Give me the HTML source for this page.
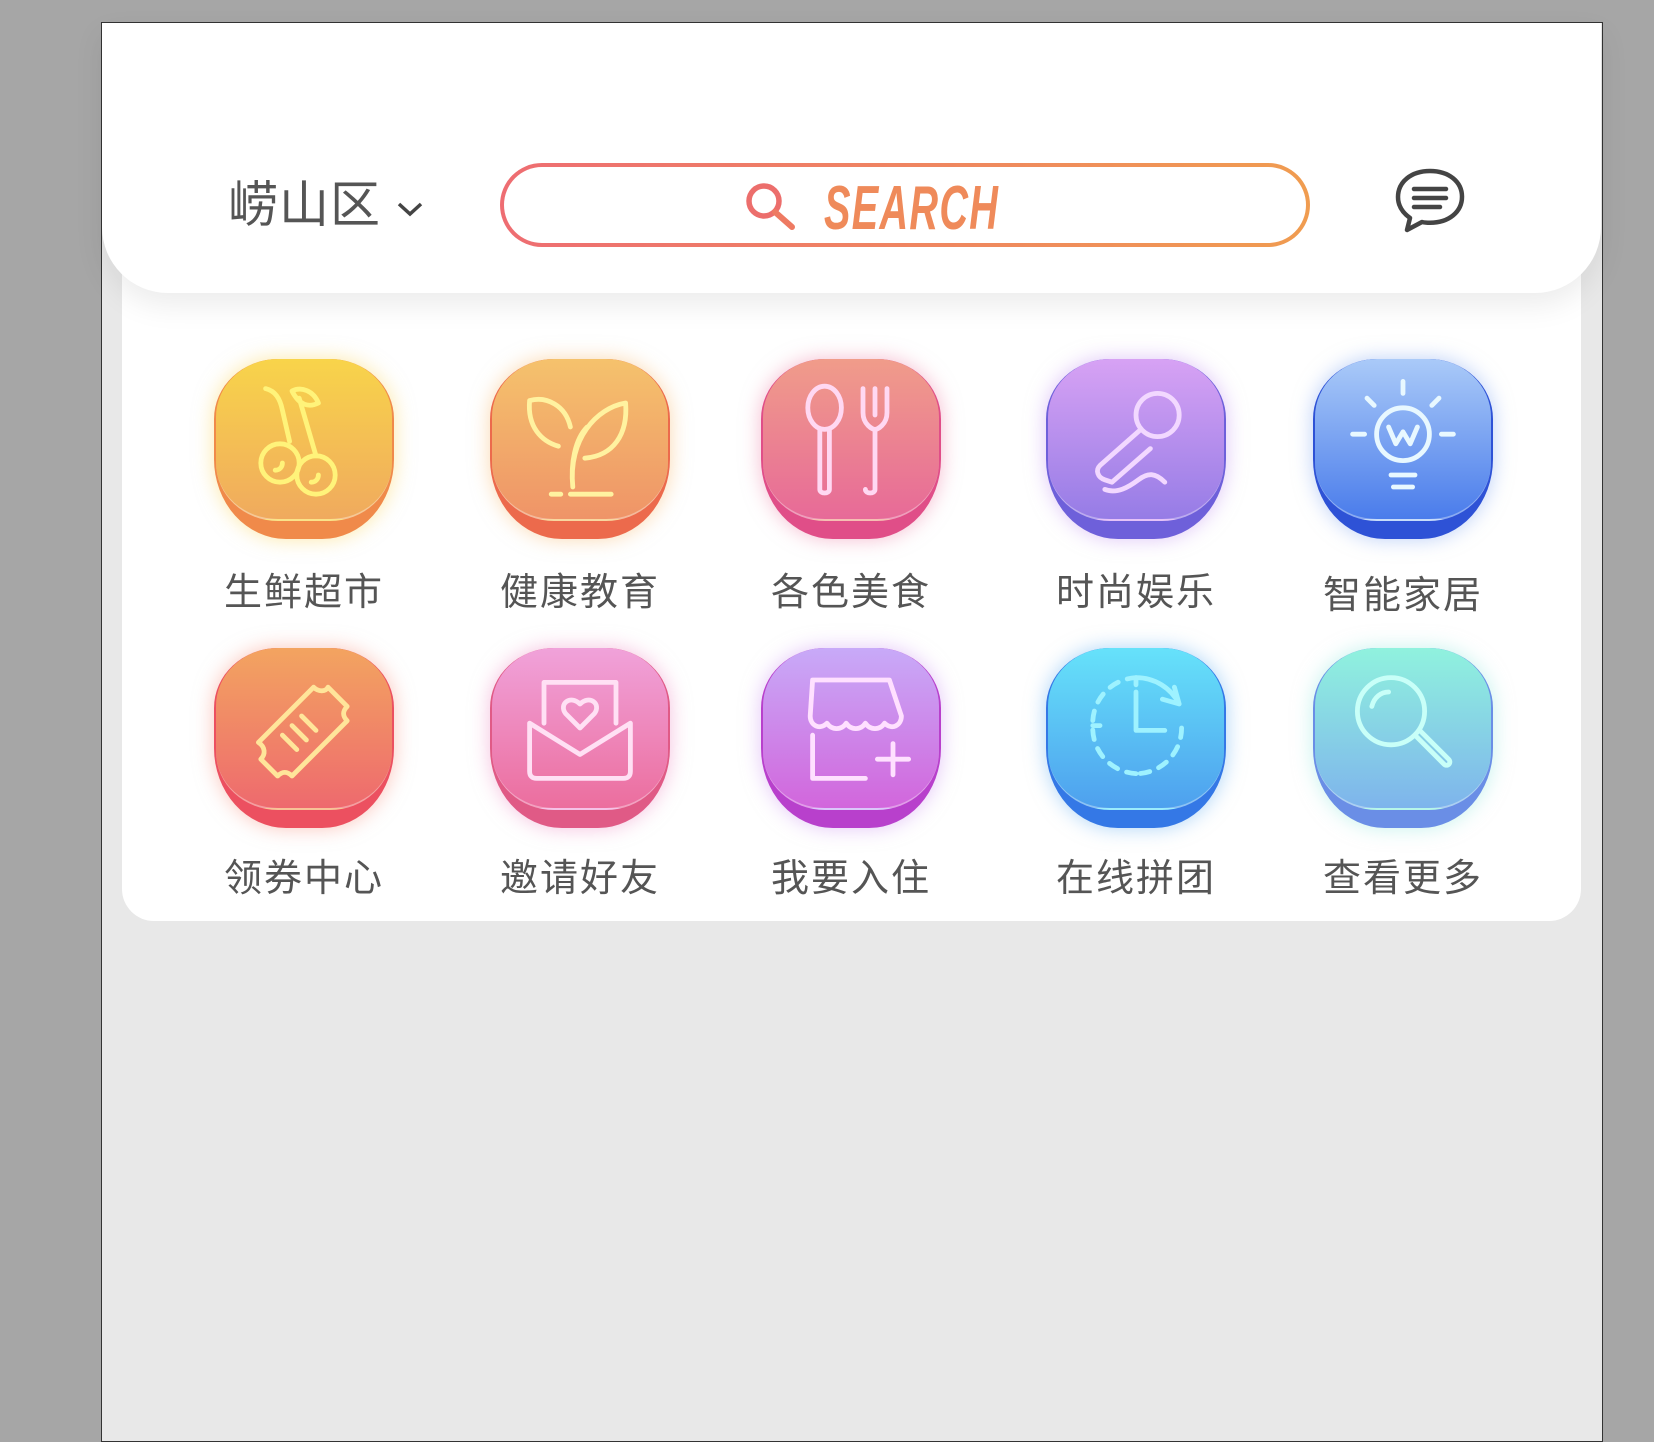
<!DOCTYPE html>
<html><head><meta charset="utf-8"><style>
*{margin:0;padding:0;box-sizing:border-box}
body{width:1654px;height:1428px;background:#a6a6a6;position:relative;overflow:hidden;font-family:"Liberation Sans","Noto Sans CJK SC",sans-serif}
.frame{position:absolute;left:101px;top:22px;width:1502px;height:1420px;background:#e8e8e8;border:1.5px solid #333}
.header{position:absolute;left:0;top:0;width:1499px;height:270px;background:#fff;border-radius:0 0 66px 66px;box-shadow:0 12px 30px rgba(0,0,0,.08);z-index:2}
.grid{position:absolute;left:20px;top:200px;width:1459px;height:698px;background:#fff;border-radius:32px}
.loc{position:absolute;left:126px;top:142px;font-size:50px;color:#555;letter-spacing:1px}
.search{position:absolute;left:398px;top:140px;width:810px;height:84px;border-radius:42px;padding:4px;background:linear-gradient(90deg,#ee6d72,#f09c50)}
.search .in{width:100%;height:100%;background:#fff;border-radius:38px;position:relative}
.st{position:absolute;left:320px;top:6px;font-size:62px;font-weight:bold;font-style:italic;color:#ef8a5a;transform:scaleX(.64);transform-origin:left;letter-spacing:2px;font-family:"Liberation Sans Narrow","Liberation Sans",sans-serif}
.ic{position:absolute;width:180px;height:180px}
.ic .base{position:absolute;left:0;top:0;width:180px;height:180px;border-radius:64px 64px 72px 72px/60px 60px 80px 80px}
.ic .face{position:absolute;left:2px;top:0;width:176px;height:162px;border-radius:62px/58px;border-bottom:2px solid rgba(255,255,255,.35)}
.ic svg{position:absolute;left:18px;top:8px;width:144px;height:144px;fill:none;stroke-width:4;stroke-linecap:round;stroke-linejoin:round}
.lb{position:absolute;width:240px;text-align:center;font-size:38px;color:#555;letter-spacing:2px}
</style></head><body>
<div class="frame">
 <div class="header">
  <div class="loc">崂山区 <svg width="28" height="20" viewBox="0 0 28 20" style="vertical-align:middle"><path d="M3 5l11 10 11-10" stroke="#444" stroke-width="3.5" fill="none"/></svg></div>
  <div class="search"><div class="in">
   <svg style="position:absolute;left:238px;top:12px" width="62" height="54" viewBox="0 0 62 54"><circle cx="22" cy="22" r="15" stroke="#ec6e6c" stroke-width="5.5" fill="none"/><path d="M33 33l17 15" stroke="#ee7a62" stroke-width="6" stroke-linecap="round"/></svg>
   <div class="st">SEARCH</div>
  </div></div>
  <svg style="position:absolute;left:1292px;top:143px" width="72" height="68" viewBox="0 0 72 68"><path d="M36 5C17 5 4 16 4 31c0 9 5 16 12 21l-3 12 15-8c2 .5 5 .8 8 .8 19 0 32-11 32-26S55 5 36 5z" stroke="#444" stroke-width="4.5" fill="none" stroke-linejoin="round"/><path d="M20 23h32M20 32h32M20 41h26" stroke="#444" stroke-width="4.5" stroke-linecap="round"/></svg>
 </div>
 <div class="grid"></div>
</div>

<!-- row 1 -->
<div class="ic" style="left:214px;top:359px;filter:drop-shadow(0 0 10px rgba(250,210,80,.5))"><div class="base" style="background:#f08a4a"></div><div class="face" style="background:linear-gradient(#f8d44a,#f0aa5e)"></div>
<svg viewBox="0 0 120 120" stroke="#fff37a"><path d="M28 18c8 2 12 8 14 18l6 26M50 20c8-4 18 0 22 10-8 4-16 2-22-10zM56 26l14 48"/><circle cx="40" cy="80" r="16"/><circle cx="70" cy="90" r="16"/><path d="M36 86c4 0 6-3 6-6M66 96c4 0 6-3 6-6"/></svg></div>
<div class="ic" style="left:490px;top:359px;filter:drop-shadow(0 0 10px rgba(245,180,100,.5))"><div class="base" style="background:#ec6a4c"></div><div class="face" style="background:linear-gradient(#f5c26c,#ef9468)"></div>
<svg viewBox="0 0 120 120" stroke="#fff2a0"><path d="M18 28c14-4 30 4 34 22M18 28c-2 22 10 34 24 38M54 100c-4-40 20-66 44-70 2 26-10 44-34 46M66 50c-10 10-14 30-12 50M36 106h8M52 106h34"/></svg></div>
<div class="ic" style="left:761px;top:359px;filter:drop-shadow(0 0 10px rgba(235,120,160,.5))"><div class="base" style="background:#e04e88"></div><div class="face" style="background:linear-gradient(#f09c8a,#e76a98)"></div>
<svg viewBox="0 0 120 120" stroke="#ffd8f2"><ellipse cx="38" cy="34" rx="14" ry="18"/><path d="M34 52v50c0 4 8 4 8 0V52M70 18v20c0 10 8 14 10 14s10-4 10-14V18M80 18v22M80 52v50c0 4-8 4-8 0"/></svg></div>
<div class="ic" style="left:1046px;top:359px;filter:drop-shadow(0 0 10px rgba(190,140,240,.5))"><div class="base" style="background:#6e60da"></div><div class="face" style="background:linear-gradient(#d7a2f4,#967ce6)"></div>
<svg viewBox="0 0 120 120" stroke="#f2d8ff"><circle cx="78" cy="40" r="18"/><path d="M64 52L30 82c-4 4-2 10 4 12l6 2 32-28M34 102c10 4 20-2 28-8 8-6 14-6 22 2"/></svg></div>
<div class="ic" style="left:1313px;top:359px;filter:drop-shadow(0 0 10px rgba(120,160,240,.5))"><div class="base" style="background:#2e52d6"></div><div class="face" style="background:linear-gradient(#aacaf8,#4a7ceb)"></div>
<svg viewBox="0 0 120 120" stroke="#e8f8ff"><circle cx="60" cy="56" r="22"/><path d="M48 50l6 14 6-10 6 10 6-14M60 12v10M30 26l6 6M90 26l-6 6M18 56h10M92 56h10M50 90h20M52 100h16"/></svg></div>

<!-- row 2 -->
<div class="ic" style="left:214px;top:648px;filter:drop-shadow(0 0 10px rgba(245,140,120,.5))"><div class="base" style="background:#ec5060"></div><div class="face" style="background:linear-gradient(#f3a460,#ee6a6e)"></div>
<svg viewBox="0 0 120 120" stroke="#ffe59a"><path d="M22 72l46-46c4 4 10 4 12 0l16 16c-4 4-4 8 0 12L50 100c-4-4-8-4-12 0L24 86c4-4 4-10-2-14zM50 58l12 12M42 66l12 12M58 50l12 12"/></svg></div>
<div class="ic" style="left:490px;top:648px;filter:drop-shadow(0 0 10px rgba(235,130,190,.5))"><div class="base" style="background:#e05a86"></div><div class="face" style="background:linear-gradient(#f0a2da,#ec6e9e)"></div>
<svg viewBox="0 0 120 120" stroke="#ffe0f4"><path d="M30 56V22h60v34M18 56v40c0 4 2 6 6 6h72c4 0 6-2 6-6V56l-42 26-42-26zM60 60l-12-12c-6-8 4-16 12-8 8-8 18 0 12 8z"/></svg></div>
<div class="ic" style="left:761px;top:648px;filter:drop-shadow(0 0 10px rgba(200,140,240,.5))"><div class="base" style="background:#b840cc"></div><div class="face" style="background:linear-gradient(#c8aaf8,#d266dc)"></div>
<svg viewBox="0 0 120 120" stroke="#ffe0ff"><path d="M28 20h64l10 30c0 8-8 12-14 6-4 6-12 6-16 0-4 6-12 6-16 0-4 6-12 6-16 0-6 6-14 2-14-6zM28 66v36h44M82 86h26M95 73v26"/></svg></div>
<div class="ic" style="left:1046px;top:648px;filter:drop-shadow(0 0 10px rgba(90,170,240,.5))"><div class="base" style="background:#3478e6"></div><div class="face" style="background:linear-gradient(#66e2fa,#4ea0ee)"></div>
<svg viewBox="0 0 120 120" stroke="#9ef2ff"><path d="M60 18a40 40 0 0 1 36 22M92 26l4 14-14-4M60 30v20M60 18v6M60 40v22h24M24 58h6"/><path d="M98 60a38 38 0 0 1-40 38M60 98A38 38 0 0 1 24 58 38 38 0 0 1 60 18" stroke-dasharray="8 8"/></svg></div>
<div class="ic" style="left:1313px;top:648px;filter:drop-shadow(0 0 10px rgba(140,230,220,.5))"><div class="base" style="background:#6a8ee6"></div><div class="face" style="background:linear-gradient(#90f2de,#7eb4ec)"></div>
<svg viewBox="0 0 120 120" stroke="#c8fff8"><circle cx="50" cy="46" r="28"/><path d="M34 42c2-8 8-12 14-12M70 66l24 24c3 3 7-1 4-4L74 62"/></svg></div>

<div class="lb" style="left:184px;top:561px">生鲜超市</div>
<div class="lb" style="left:460px;top:561px">健康教育</div>
<div class="lb" style="left:731px;top:561px">各色美食</div>
<div class="lb" style="left:1016px;top:561px">时尚娱乐</div>
<div class="lb" style="left:1283px;top:564px">智能家居</div>
<div class="lb" style="left:184px;top:847px">领券中心</div>
<div class="lb" style="left:460px;top:847px">邀请好友</div>
<div class="lb" style="left:731px;top:847px">我要入住</div>
<div class="lb" style="left:1016px;top:847px">在线拼团</div>
<div class="lb" style="left:1283px;top:847px">查看更多</div>
</body></html>
